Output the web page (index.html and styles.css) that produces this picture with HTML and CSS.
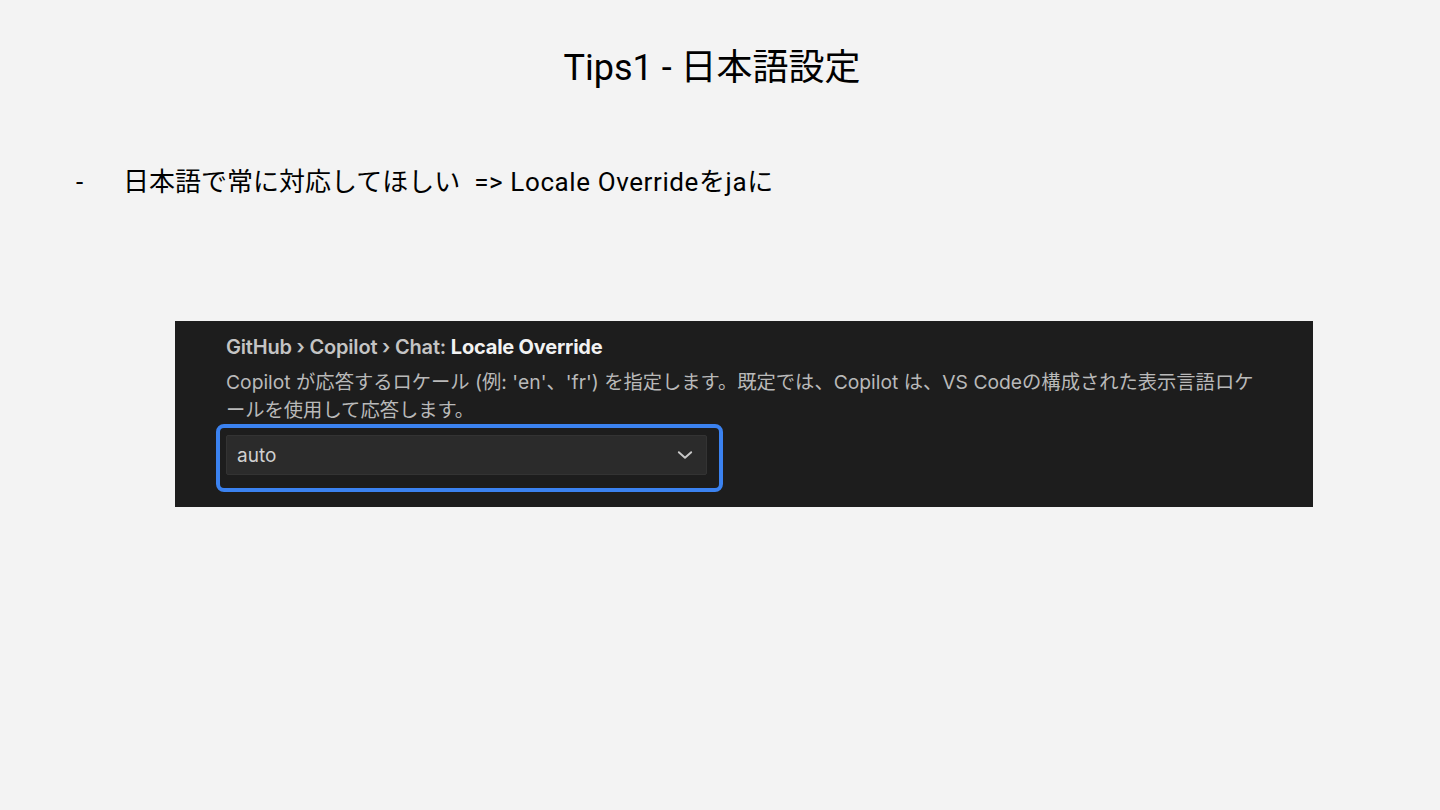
FILE: index.html
```html
<!DOCTYPE html>
<html lang="ja">
<head>
    <meta charset="UTF-8">
    <meta name="viewport" content="width=device-width, initial-scale=1.0">
    <title>Tips1 - 日本語設定</title>
    <link rel="stylesheet" href="styles.css">
</head>
<body>

    <h1 class="slide-title">Tips1 - 日本語設定</h1>

    <ul class="bullets">
        <li><span class="dash">-</span>日本語で常に対応してほしい<span class="arrow">=&gt; Locale Overrideをjaに</span></li>
    </ul>

    <div class="setting-shot">
        <div class="setting-title">GitHub › Copilot › Chat: <b>Locale Override</b></div>
        <div class="setting-desc">Copilot が応答するロケール (例: 'en'、'fr') を指定します。既定では、Copilot は、VS Codeの構成された表示言語ロケ<br>ールを使用して応答します。</div>
        <div class="select-focus">
            <div class="select-box">
                <span>auto</span>
                <svg class="chevron" width="18" height="18" viewBox="0 0 16 16">
                    <path d="M2.5 5.5 L8 10.5 L13.5 5.5" fill="none" stroke="#c8c8c8" stroke-width="1.7" stroke-linecap="round" stroke-linejoin="round"/>
                </svg>
            </div>
        </div>
    </div>

</body>
</html>
```

FILE: styles.css
```css
body {
    margin: 0;
    background: #f3f3f3;
    font-family: Roboto, "Noto Sans CJK JP", sans-serif;
    color: #000;
    height: 810px;
}

.slide-title {
    margin: 0;
    padding: 45px 16px 0 0;
    text-align: center;
    font-size: 36px;
    font-weight: 400;
    line-height: 46px;
}

.bullets {
    list-style: none;
    margin: 74px 0 0 0;
    padding: 0 0 0 76px;
    font-size: 26px;
    line-height: 34px;
}

.bullets .dash {
    display: inline-block;
    width: 47px;
}

.bullets .arrow {
    margin-left: 14px;
    letter-spacing: 0.6px;
}

.setting-shot {
    margin: 122px 0 0 175px;
    width: 1138px;
    height: 186px;
    box-sizing: border-box;
    background: #1d1d1d;
    padding: 13px 0 0 41px;
    font-family: Inter, "Noto Sans CJK JP", sans-serif;
}

.setting-title {
    padding-left: 10px;
    font-size: 20px;
    line-height: 26px;
    color: #c4c4c4;
    font-weight: 600;
    letter-spacing: -0.2px;
}

.setting-title b {
    color: #f2f2f2;
    font-weight: 700;
}

.setting-desc {
    padding-left: 10px;
    margin-top: 8px;
    font-size: 19.3px;
    line-height: 28px;
    color: #b9b9b9;
}

.select-focus {
    margin-top: 0;
    width: 507px;
    height: 68px;
    box-sizing: border-box;
    border: 4px solid #3b82f0;
    border-radius: 8px;
    padding: 7px 12px 0 6px;
}

.select-box {
    display: flex;
    align-items: center;
    justify-content: space-between;
    height: 40px;
    box-sizing: border-box;
    background: #2b2b2b;
    border: 1px solid #333;
    border-radius: 2px;
    padding: 0 12px 0 10px;
    font-size: 19px;
    color: #d0d0d0;
}
```
